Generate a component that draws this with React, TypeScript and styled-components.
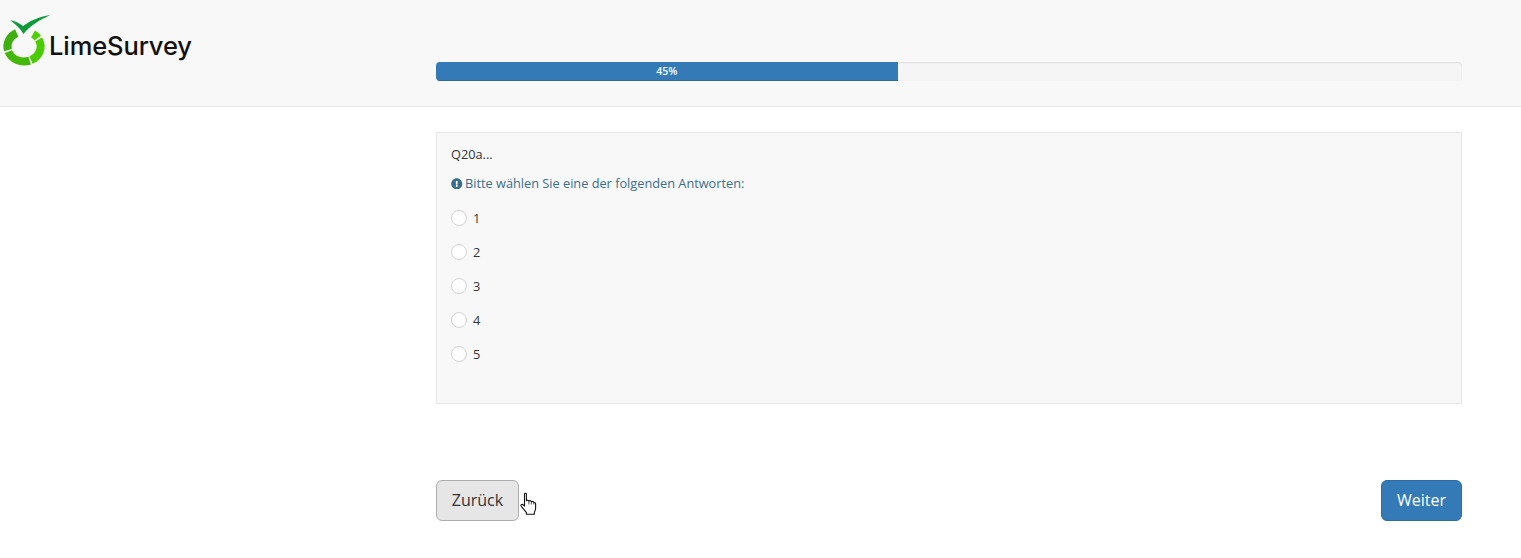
import React from "react";
import styled, { createGlobalStyle } from "styled-components";
import { FaExclamationCircle } from "react-icons/fa";

const GlobalStyle = createGlobalStyle`
  html, body {
    margin: 0;
    padding: 0;
    background: #ffffff;
    font-family: "Open Sans", "Noto Sans", sans-serif;
    color: #333333;
  }
`;

const answers = ["1", "2", "3", "4", "5"];

// ring pieces of the logo, degrees clockwise from the top
const ringParts = [
  { from: 33, to: 56, color: "#4fd000" },
  { from: 62, to: 155, color: "#4acb02" },
  { from: 160, to: 250, color: "#43b80a" },
  { from: 256, to: 334, color: "#3fae10" },
];

function arc(from: number, to: number) {
  const rx = 16.6;
  const ry = 15;
  const point = (deg: number) => {
    const a = (deg * Math.PI) / 180;
    return `${(24 + rx * Math.sin(a)).toFixed(2)} ${(46.5 - ry * Math.cos(a)).toFixed(2)}`;
  };
  return `M${point(from)} A${rx} ${ry} 0 ${to - from > 180 ? 1 : 0} 1 ${point(to)}`;
}

function LogoMark() {
  return (
    <LogoSvg viewBox="0 0 52 70" aria-hidden="true">
      {ringParts.map((part) => (
        <path
          key={part.from}
          d={arc(part.from, part.to)}
          fill="none"
          stroke={part.color}
          strokeWidth="8"
        />
      ))}
      <path
        d="M10 20 C15 21 19 23 23 26 C30 21 38 17 50.5 15 C39 20 30 26 23.5 34 C20 28 15 24 10 20 Z"
        fill="#0f9a3c"
      />
    </LogoSvg>
  );
}

function HandCursor() {
  return (
    <CursorSvg viewBox="0 0 17 23" aria-hidden="true">
      <path
        d="M4.5 1.5 C4.5 .4 6.4 .4 6.4 1.5 V8.2 C7 7.4 8.6 7.5 8.9 8.6 C9.6 7.8 11.1 8.1 11.3 9.2 C12.1 8.6 13.6 8.9 13.8 10.1 C14.3 9.9 15.5 10.2 15.6 11.3 V16 C15.6 17.5 15 18.5 14.4 19.5 V21.8 H6.4 V20.1 C5.3 18.6 3.2 16.2 1.3 13.8 C.4 12.6 1.8 11.3 3 12.2 L4.5 13.6 Z"
        fill="#ffffff"
        stroke="#111111"
        strokeWidth="1.1"
        strokeLinejoin="round"
      />
      <path d="M8.9 8.6 V12 M11.3 9.2 V12 M13.8 10.1 V12" stroke="#111111" strokeWidth="0.7" fill="none" />
    </CursorSvg>
  );
}

export default function App() {
  return (
    <>
      <GlobalStyle />
      <Header>
        <Brand>
          <LogoMark />
          <BrandName>LimeSurvey</BrandName>
        </Brand>
        <ProgressTrack>
          <ProgressFill style={{ width: "45%" }}>45%</ProgressFill>
        </ProgressTrack>
      </Header>
      <Main>
        <QuestionCard>
          <QuestionTitle>Q20a...</QuestionTitle>
          <Help>
            <FaExclamationCircle size={11.5} />
            Bitte wählen Sie eine der folgenden Antworten:
          </Help>
          <AnswerList>
            {answers.map((answer) => (
              <AnswerRow key={answer}>
                <Radio />
                <span>{answer}</span>
              </AnswerRow>
            ))}
          </AnswerList>
        </QuestionCard>
        <Nav>
          <BackWrap>
            <BackButton>Zurück</BackButton>
            <HandCursor />
          </BackWrap>
          <NextButton>Weiter</NextButton>
        </Nav>
      </Main>
    </>
  );
}

const Header = styled.header`
  display: grid;
  grid-template-columns: 436px 1026px;
  height: 106px;
  background: #f8f8f8;
  border-bottom: 1px solid #e7e7e7;
`;

const Brand = styled.div`
  display: flex;
  align-items: flex-start;
`;

const LogoSvg = styled.svg`
  display: block;
  width: 52px;
  height: 70px;
  margin-right: -3px;
`;

const BrandName = styled.span`
  margin-top: 29px;
  font-family: "Inter", "Liberation Sans", sans-serif;
  font-size: 25.5px;
  line-height: 34px;
  font-weight: 500;
  letter-spacing: -0.1px;
  color: #111111;
`;

const ProgressTrack = styled.div`
  align-self: start;
  margin-top: 62px;
  height: 19px;
  background: #f5f5f5;
  border-radius: 4px;
  overflow: hidden;
  box-shadow: inset 0 1px 2px rgba(0, 0, 0, 0.1);
`;

const ProgressFill = styled.div`
  height: 100%;
  background: #337ab7;
  color: #ffffff;
  font-size: 10.5px;
  line-height: 19px;
  font-weight: 600;
  text-align: center;
  box-shadow: inset 0 -1px 0 rgba(0, 0, 0, 0.15);
`;

const Main = styled.main`
  width: 1026px;
  margin-left: 436px;
  padding-top: 25px;
`;

const QuestionCard = styled.section`
  box-sizing: border-box;
  height: 272px;
  padding: 13px 14px 0;
  background: #f8f8f8;
  border: 1px solid #e7e7e7;
  font-size: 12.75px;
`;

const QuestionTitle = styled.div`
  line-height: 17px;
  color: #333333;
`;

const Help = styled.div`
  display: flex;
  align-items: center;
  gap: 2.5px;
  margin-top: 12px;
  line-height: 17px;
  color: #3a6d8a;
`;

const AnswerList = styled.div`
  display: flex;
  flex-direction: column;
  gap: 18px;
  margin-top: 18px;
`;

const AnswerRow = styled.label`
  display: flex;
  align-items: center;
  gap: 6px;
  height: 16px;
  line-height: 16px;
  color: #333333;
`;

const Radio = styled.span`
  box-sizing: border-box;
  width: 16px;
  height: 16px;
  border: 1px solid #d4d4d4;
  border-radius: 50%;
  background: #ffffff;
`;

const Nav = styled.div`
  display: flex;
  justify-content: space-between;
  margin-top: 76px;
`;

const BackWrap = styled.div`
  position: relative;
`;

const BackButton = styled.button`
  box-sizing: border-box;
  width: 83px;
  height: 41px;
  padding: 0 0 2px;
  background: #e6e6e6;
  border: 1px solid #adadad;
  border-radius: 6px;
  font-family: inherit;
  font-size: 16px;
  color: #333333;
`;

const NextButton = styled.button`
  box-sizing: border-box;
  width: 81px;
  height: 41px;
  padding: 0 0 2px;
  background: #337ab7;
  border: 1px solid #2e6da4;
  border-radius: 6px;
  font-family: inherit;
  font-size: 16px;
  font-weight: 500;
  color: #ffffff;
`;

const CursorSvg = styled.svg`
  position: absolute;
  left: 84px;
  top: 12px;
  width: 17px;
  height: 24px;
`;
